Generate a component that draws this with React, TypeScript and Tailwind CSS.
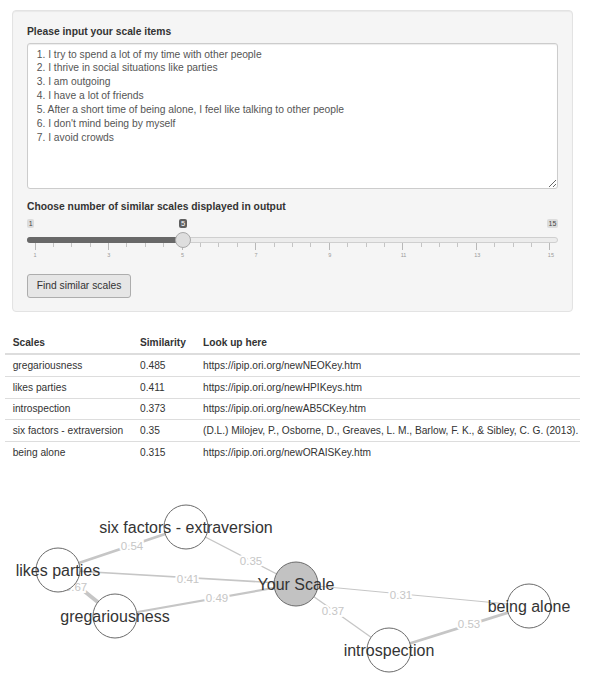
import React from "react";

const items = `1. I try to spend a lot of my time with other people
2. I thrive in social situations like parties
3. I am outgoing
4. I have a lot of friends
5. After a short time of being alone, I feel like talking to other people
6. I don't mind being by myself
7. I avoid crowds`;

const rows = [
  ["gregariousness", "0.485", "https://ipip.ori.org/newNEOKey.htm"],
  ["likes parties", "0.411", "https://ipip.ori.org/newHPIKeys.htm"],
  ["introspection", "0.373", "https://ipip.ori.org/newAB5CKey.htm"],
  [
    "six factors - extraversion",
    "0.35",
    "(D.L.) Milojev, P., Osborne, D., Greaves, L. M., Barlow, F. K., & Sibley, C. G. (2013).",
  ],
  ["being alone", "0.315", "https://ipip.ori.org/newORAISKey.htm"],
];

type N = { id: string; label: string; x: number; y: number; fill?: string };
const nodes: N[] = [
  { id: "six", label: "six factors - extraversion", x: 186, y: 527 },
  { id: "likes", label: "likes parties", x: 58, y: 570 },
  { id: "greg", label: "gregariousness", x: 115, y: 616 },
  { id: "you", label: "Your Scale", x: 296, y: 584, fill: "#c2c2c2" },
  { id: "alone", label: "being alone", x: 529, y: 606 },
  { id: "intro", label: "introspection", x: 389, y: 650 },
];
const byId = Object.fromEntries(nodes.map((n) => [n.id, n]));

const edges = [
  { a: "you", b: "six", v: "0.35", lx: 251, ly: 561, w: 1.2 },
  { a: "you", b: "likes", v: "0.41", lx: 188, ly: 579, w: 1.6 },
  { a: "you", b: "greg", v: "0.49", lx: 217, ly: 598, w: 2.2 },
  { a: "you", b: "alone", v: "0.31", lx: 401, ly: 595, w: 1 },
  { a: "you", b: "intro", v: "0.37", lx: 333, ly: 611, w: 1.3 },
  { a: "six", b: "likes", v: "0.54", lx: 132, ly: 546, w: 2.8 },
  { a: "likes", b: "greg", v: "0.67", lx: 76, ly: 587, w: 3.8 },
  { a: "intro", b: "alone", v: "0.53", lx: 469, ly: 624, w: 2.8 },
];

const tickLabels = ["1", "3", "5", "7", "9", "11", "13", "15"];

function Slider() {
  return (
    <div className="flex w-[531px] flex-col">
      <div className="relative mt-[5px] flex h-[9px] justify-between">
        <div className="rounded-[2px] bg-[#dcdcdc] px-[1.7px] text-[7px] leading-[9px] text-[#444]">1</div>
        <div className="absolute left-[152px] top-0 h-[9px] w-[8px] rounded-[2px] bg-[#5f5f5f] text-center text-[7.5px] leading-[9px] text-white">
          5
        </div>
        <div className="rounded-[2px] bg-[#dcdcdc] px-[1.7px] text-[7px] leading-[9px] text-[#444]">15</div>
      </div>
      <div className="relative mt-[9px] h-[6px] rounded-full border border-[#cfcfcf] bg-[#ececec]">
        <div className="-ml-px -mt-px h-[6px] w-[156px] rounded-l-full bg-[#686868]" />
        <div className="absolute left-[147px] top-[-6px] h-[16px] w-[16px] rounded-full border border-[#a9a9a9] bg-[#dedede]" />
      </div>
      <div className="flex h-[7px] items-start justify-between px-[7.5px]">
        {Array.from({ length: 29 }).map((_, i) =>
          i % 4 === 0 ? (
            <div key={i} className="h-[7px] w-px bg-[#b8b8b8]" />
          ) : (
            <div key={i} className="h-[3.5px] w-px bg-[#c4c4c4]" />
          )
        )}
      </div>
      <div className="mt-[2px] flex justify-between -mr-[1px]">
        {tickLabels.map((t) => (
          <div key={t} className="w-[16px] text-center text-[5.5px] leading-[7px] text-[#9a9a9a]">
            {t}
          </div>
        ))}
      </div>
    </div>
  );
}

function Graph() {
  return (
    <svg width={598} height={231} viewBox="0 463 598 231" className="block">
      {edges.map((e, i) => {
        const a = byId[e.a];
        const b = byId[e.b];
        return <line key={i} x1={a.x} y1={a.y} x2={b.x} y2={b.y} stroke="#c6c6c6" strokeWidth={e.w} />;
      })}
      {edges.map((e, i) => (
        <text
          key={"l" + i}
          x={e.lx}
          y={e.ly}
          textAnchor="middle"
          dominantBaseline="central"
          fontSize={11.5}
          fill="#c6c6c6"
          stroke="#ffffff"
          strokeWidth={4}
          paintOrder="stroke"
          fontFamily="'Liberation Sans', Arial, sans-serif"
        >
          {e.v}
        </text>
      ))}
      {nodes.map((n) => (
        <circle key={n.id} cx={n.x} cy={n.y} r={22} fill={n.fill ?? "#ffffff"} stroke="#6a6a6a" strokeWidth={1} />
      ))}
      {nodes.map((n) => (
        <text
          key={"t" + n.id}
          x={n.x}
          y={n.y}
          textAnchor="middle"
          dominantBaseline="central"
          fontSize={16}
          fill="#343434"
          fontFamily="'Liberation Sans', Arial, sans-serif"
        >
          {n.label}
        </text>
      ))}
    </svg>
  );
}

export default function App() {
  return (
    <div className="h-[694px] w-[598px] overflow-hidden bg-white font-['Liberation_Sans',Arial,sans-serif] text-[#333]">
      <div className="ml-[12px] mt-[10px] flex h-[302px] w-[561px] flex-col rounded-[4px] border border-[#e3e3e3] bg-[#f5f5f5] px-[14px] pt-[14px] shadow-[inset_0_1px_1px_rgba(0,0,0,0.05)]">
        <div className="h-[14px] text-[10.3px] font-bold leading-[14px] text-[#333]">Please input your scale items</div>
        <textarea
          className="mt-[4px] block h-[146px] w-[531px] rounded-[3px] border border-[#cccccc] bg-white px-[8.7px] py-[3.5px] text-[10.3px] leading-[13.9px] text-[#555] shadow-[inset_0_1px_1px_rgba(0,0,0,0.075)] outline-none"
          defaultValue={items}
        />
        <div className="mt-[11px] h-[14px] text-[10.3px] font-bold leading-[14px] text-[#333]">
          Choose number of similar scales displayed in output
        </div>
        <Slider />
        <button className="mt-[15px] flex h-[24px] w-[104px] items-center justify-center rounded-[3px] border border-[#adadad] bg-[#e6e6e6] text-[10.3px] text-[#333]">
          Find similar scales
        </button>
      </div>

      <div className="ml-[5px] mt-[21.3px] flex w-[575px] flex-col text-[10.2px] text-[#333]">
        <div className="flex h-[22px] items-center border-b-2 border-[#dddddd] pb-[1px] font-bold">
          <div className="w-[127.3px] pl-[7.7px]">Scales</div>
          <div className="w-[63px] pl-[7.7px]">Similarity</div>
          <div className="flex-1 pl-[7.7px]">Look up here</div>
        </div>
        {rows.map((r, i) => (
          <div
            key={i}
            className={
              i < rows.length - 1
                ? "flex h-[21.7px] items-center whitespace-nowrap border-b border-[#dddddd]"
                : "flex h-[20.7px] items-center whitespace-nowrap"
            }
          >
            <div className="w-[127.3px] pl-[7.7px]">{r[0]}</div>
            <div className="w-[63px] pl-[7.7px]">{r[1]}</div>
            <div className="flex-1 pl-[7.7px]">{r[2]}</div>
          </div>
        ))}
      </div>

      <Graph />
    </div>
  );
}
